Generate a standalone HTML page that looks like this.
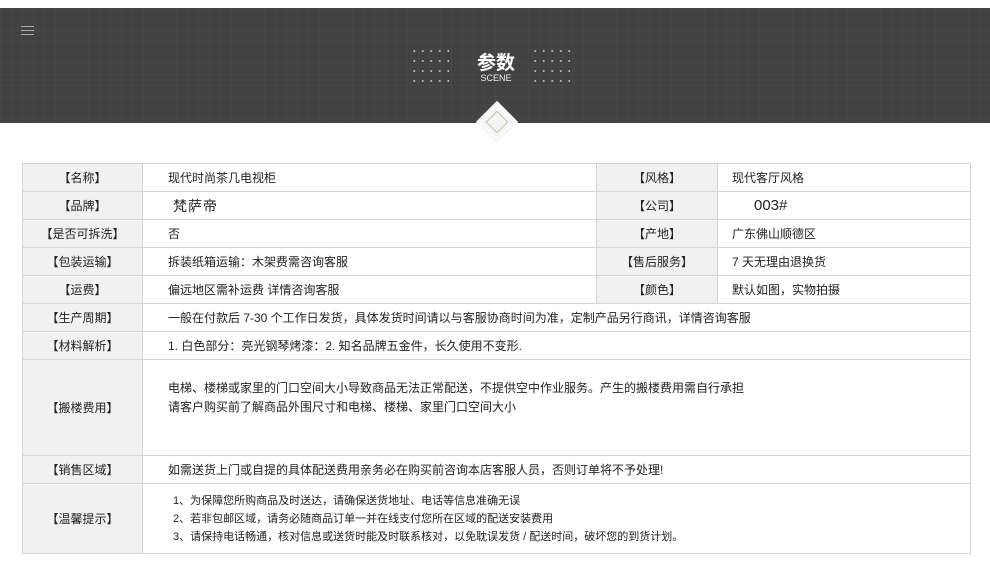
<!DOCTYPE html>
<html><head><meta charset="utf-8"><style>
body{margin:0;background:#fff;width:990px;height:573px;overflow:hidden;font-family:"Liberation Sans","Noto Sans CJK SC",sans-serif;font-size:12px;color:#222}
.hdr{position:absolute;left:0;top:8px;width:990px;height:115px;background:#424242;
background-image:linear-gradient(rgba(255,255,255,.025) 1px,transparent 1px),linear-gradient(90deg,rgba(255,255,255,.025) 1px,transparent 1px);background-size:11px 11px}
.menu{position:absolute;left:21px;top:18px;width:13px;height:1px;background:#aaa;box-shadow:0 4px 0 #aaa,0 8px 0 #aaa}
.t1{position:absolute;left:470px;top:44px;width:52px;text-align:center;color:#fff;font-size:19px;font-weight:bold;line-height:24px}
.t2{position:absolute;left:470px;top:64px;width:52px;text-align:center;color:#eee;font-size:9px;line-height:12px}
.dots{position:absolute;top:38px;width:44px;height:40px;background-image:radial-gradient(circle,#bbb 0.8px,transparent 1.2px);background-size:8.5px 10px}
.dia{position:absolute;left:485px;top:110px;width:22px;height:22px;transform:rotate(45deg);background:#f3f3f3;border:1px solid #fff;box-shadow:0 0 0 3px #f6f6f6}
.dia i{position:absolute;left:3px;top:3px;width:14px;height:14px;border:1px solid #c9c3b7}
table{position:absolute;left:22px;top:163px;border-collapse:collapse;width:949px}
td{border:1px solid #d4d4d4;height:27px;padding:0;vertical-align:middle}
td.l{background:#f1f1f1;width:119px;text-align:center}
td.v{padding-left:25px}
</style></head><body>
<div class="hdr"><div class="menu"></div>
<div class="dots" style="left:410px"></div><div class="dots" style="left:531px"></div>
<div class="t1">参数</div><div class="t2">SCENE</div></div>
<div class="dia"><i></i></div>
<table>
<tr><td class="l">【名称】</td><td class="v" style="width:428px">现代时尚茶几电视柜</td><td class="l" style="width:120px">【风格】</td><td class="v" style="padding-left:14px">现代客厅风格</td></tr>
<tr><td class="l">【品牌】</td><td class="v" style="padding-left:30px;font-size:14px;letter-spacing:1px">梵萨帝</td><td class="l">【公司】</td><td class="v" style="padding-left:36px;font-size:15px">003#</td></tr>
<tr><td class="l">【是否可拆洗】</td><td class="v">否</td><td class="l">【产地】</td><td class="v" style="padding-left:14px">广东佛山顺德区</td></tr>
<tr><td class="l">【包装运输】</td><td class="v">拆装纸箱运输：木架费需咨询客服</td><td class="l">【售后服务】</td><td class="v" style="padding-left:14px">7 天无理由退换货</td></tr>
<tr><td class="l">【运费】</td><td class="v">偏远地区需补运费 详情咨询客服</td><td class="l">【颜色】</td><td class="v" style="padding-left:14px">默认如图，实物拍摄</td></tr>
<tr><td class="l">【生产周期】</td><td class="v" colspan="3">一般在付款后 7-30 个工作日发货，具体发货时间请以与客服协商时间为准，定制产品另行商讯，详情咨询客服</td></tr>
<tr><td class="l">【材料解析】</td><td class="v" colspan="3">1. 白色部分：亮光钢琴烤漆：2. 知名品牌五金件，长久使用不变形.</td></tr>
<tr><td class="l" style="height:95px">【搬楼费用】</td><td class="v" colspan="3" style="line-height:19px;padding-bottom:20px">电梯、楼梯或家里的门口空间大小导致商品无法正常配送，不提供空中作业服务。产生的搬楼费用需自行承担<br>请客户购买前了解商品外围尺寸和电梯、楼梯、家里门口空间大小</td></tr>
<tr><td class="l">【销售区域】</td><td class="v" colspan="3">如需送货上门或自提的具体配送费用亲务必在购买前咨询本店客服人员，否则订单将不予处理!</td></tr>
<tr><td class="l" style="height:69px">【温馨提示】</td><td class="v" colspan="3" style="padding-left:30px;font-size:11px;line-height:18px">1、为保障您所购商品及时送达，请确保送货地址、电话等信息准确无误<br>2、若非包邮区域，请务必随商品订单一并在线支付您所在区域的配送安装费用<br>3、请保持电话畅通，核对信息或送货时能及时联系核对，以免耽误发货 / 配送时间，破坏您的到货计划。</td></tr>
</table>
</body></html>
